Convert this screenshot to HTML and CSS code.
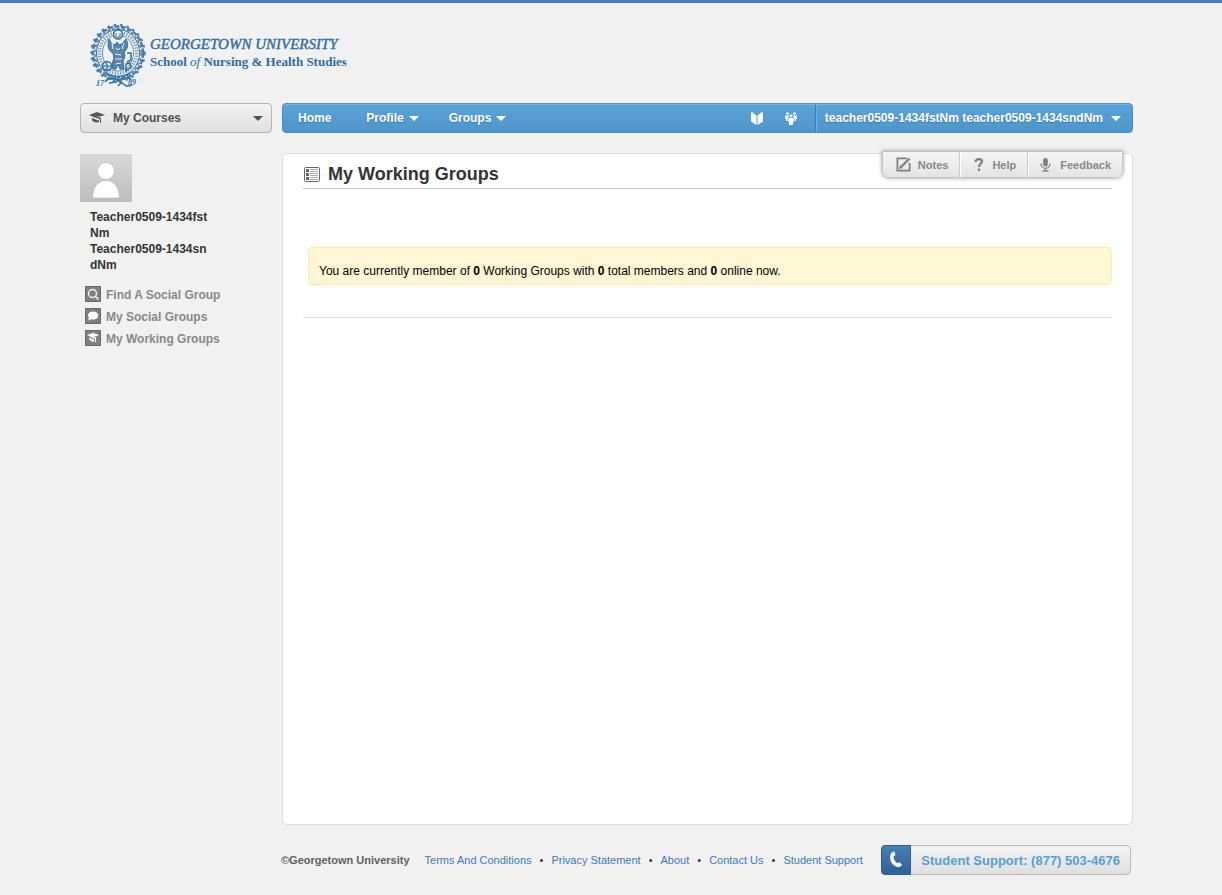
FILE: index.html
```html
<!DOCTYPE html>
<html lang="en">
<head>
<meta charset="utf-8">
<meta name="viewport" content="width=device-width, initial-scale=1">
<title>My Working Groups - Georgetown University</title>
<link rel="stylesheet" href="styles.css">
</head>
<body>
<div class="page">
  <header class="brand">
    <svg class="seal" viewBox="0 0 56 64" fill="none" stroke="#326c9f" aria-hidden="true">
      <ellipse cx="28" cy="29" rx="25" ry="26.500" stroke-width="2.500" stroke-dasharray="5 1.500" opacity=".85"/>
      <ellipse cx="28" cy="29" rx="26.500" ry="28" stroke-width="2.500" stroke-dasharray="2.500 4" opacity=".8"/>
      <ellipse cx="28" cy="29" rx="23" ry="24.500" stroke-width="1.500" stroke-dasharray="3 2" opacity=".8"/>
      <ellipse cx="28" cy="29" rx="21.500" ry="23.500" stroke-width="1"/>
      <ellipse cx="28" cy="29" rx="18.500" ry="20.500" stroke-width="3.500" stroke-dasharray="1.300 1.400" opacity=".6"/>
      <ellipse cx="28" cy="29" rx="15.500" ry="18" stroke-width="1" opacity=".7"/>
      <circle cx="28" cy="10.500" r="4.500" fill="#f1f1f1" stroke-width="1.500"/>
      <path d="M26 9v4h4V9" stroke-width="1"/>
      <path d="M19 15c-2 6-1 12 4 14l1 5-2 6 1 5h3l2-5 2 5h4l-1-8 2-5-1-4c5-4 4-9 2-13l-4 5-3 1-2-3-2 3-3-1z" fill="#326c9f" fill-opacity=".8" stroke-width="1"/>
      <path d="M22 19l1 6M34 19l-2 6M26 24l2 2 2-2M25 30l6 1M25 35h7M26 40l5-1" stroke="#f1f1f1" stroke-width="1"/>
      <circle cx="17" cy="42" r="4.500" stroke-width="1.500"/>
      <path d="M13 42h8M17 38v8" stroke-width="1"/>
      <path d="M37 29h4v7l-4 2M36 40l4-1 1 4-5 4z" stroke-width="1.500"/>
      <path d="M16 49c7 5 17 5 24 0" stroke-width="2" stroke-dasharray="3 1"/>
      <path d="M15 58c4-5 12-4 16 0s6 5 11 3M41 55c-5-2-11-1-15 3l-7 1M25 54l6 5-3 3" stroke-width="1.500"/>
      <g class="seal-year" fill="#326c9f" stroke="none"><text x="6" y="62">17</text><text x="38" y="61">89</text></g>
    </svg>
    <div class="brand-name">
      <span class="brand-university">GEORGETOWN UNIVERSITY</span>
      <span class="brand-school">School <i>of</i> Nursing &amp; Health Studies</span>
    </div>
  </header>

  <div class="bar">
    <button class="courses" type="button">
      <svg class="cap" viewBox="0 0 16 12" aria-hidden="true"><path fill="#555" d="M0 3l8-3 8 3-5 1.500C9.500 4 8 4 6 4.500c2 0 5 0 6 2V11h-1V7.500C10 6 8 6.300 6 5.500zM3 6l6 2.500 1-.5v2c-2 1-5 .5-7-1.500z"/></svg>
      <span>My Courses</span>
      <span class="caret caret-dark"></span>
    </button>
    <nav class="nav">
      <a class="nav-link" href="#">Home</a>
      <button class="nav-link" type="button">Profile<span class="caret"></span></button>
      <button class="nav-link" type="button">Groups<span class="caret"></span></button>
      <span class="nav-icons">
        <button class="icon-button" type="button" aria-label="Library"><svg class="icon-book" viewBox="0 0 12 13" aria-hidden="true"><path fill="#fff" d="M0 1l1-1 4.500 3.500V13L0 9.500zM12 1l-1-1-4.500 3.500V13L12 9.500z"/></svg></button>
        <button class="icon-button" type="button" aria-label="People"><svg class="icon-people" viewBox="0 0 12 13" fill="#fff" aria-hidden="true"><circle cx="2.500" cy="1.500" r="1.300"/><circle cx="9.500" cy="1.500" r="1.300"/><circle cx="6" cy="3.800" r="1.600"/><path d="M0 3.500h3.500v2L2.500 6.500V9H1V7H0zM12 3.500H8.500v2l1 1V9H11V7h1zM3.300 6h5.400v4H8v3H4v-3h-.7z"/></svg></button>
      </span>
      <button class="nav-user" type="button">teacher0509-1434fstNm teacher0509-1434sndNm<span class="caret"></span></button>
    </nav>
  </div>

  <div class="columns">
    <aside class="sidebar">
      <svg class="avatar" viewBox="0 0 52 48" role="img" aria-label="Profile picture">
        <defs><linearGradient id="avatar-bg" x2="0" y2="1"><stop stop-color="#d8d8d8"/><stop offset="1" stop-color="#bdbdbd"/></linearGradient></defs>
        <path fill="url(#avatar-bg)" d="M0 0h52v48H0z"/>
        <g fill="#fff" stroke="#aaa" stroke-opacity=".5"><circle cx="26" cy="17" r="8.500"/><path d="M12.500 44c0-10 5-17.500 13.500-17.500S39.500 34 39.500 44z"/></g>
      </svg>
      <p class="user-name">Teacher0509-1434fst<br>Nm<br>Teacher0509-1434sn<br>dNm</p>
      <ul class="side-links">
        <li><a href="#"><svg class="tile" viewBox="0 0 16 16" aria-hidden="true"><path fill="#808080" stroke="#666" d="M.5.500h15v15H.5z"/><g fill="none" stroke="#f4f4f4" stroke-width="1.400"><circle cx="7.500" cy="7.500" r="4"/><path d="M10.500 10.500l3 3"/></g></svg>Find A Social Group</a></li>
        <li><a href="#"><svg class="tile" viewBox="0 0 16 16" aria-hidden="true"><path fill="#808080" stroke="#666" d="M.5.500h15v15H.5z"/><path fill="#fff" d="M8 3.500c3 0 5.200 1.600 5.200 4s-2.200 4-5.200 4l-1.500-.2L3 12.500l1-2.500c-2.500-3 0-6.500 4-6.500z"/></svg>My Social Groups</a></li>
        <li><a href="#"><svg class="tile" viewBox="0 0 16 16" aria-hidden="true"><path fill="#808080" stroke="#666" d="M.5.500h15v15H.5z"/><path fill="#fff" d="M2 5l6-2 6 2-3 1.500H6c2 0 4 0 5 1.500v4h-1V9L8 8zM4 7.500L9 9.500V12C7 12 5 11 4.500 9.500z"/></svg>My Working Groups</a></li>
      </ul>
    </aside>

    <main class="panel">
      <div class="tools">
        <button class="tool tool-notes" type="button"><svg class="icon-notes" viewBox="0 0 15 15" fill="none" stroke="#808080" aria-hidden="true"><path stroke-width="1.800" d="M11 1.400H1.400v12.200h12.200V6"/><path stroke-width="2.400" d="M5.500 9.500l8-8"/><path fill="#808080" stroke="none" d="M3 12l1-4 3 3z"/></svg>Notes</button>
        <button class="tool tool-help" type="button"><svg class="icon-help" viewBox="0 0 10 13" fill="none" stroke="#808080" stroke-width="2.300" aria-hidden="true"><path d="M1.500 4C1.500 0 8 .5 8 3.500 8 6 5 5.500 5 9M5 10.500V13"/></svg>Help</button>
        <button class="tool tool-feedback" type="button"><svg class="icon-mic" viewBox="0 0 11 14" fill="none" stroke="#808080" aria-hidden="true"><rect x="3.200" y="0" width="4.600" height="8.500" rx="2.300" fill="#808080" stroke="none"/><path stroke-width="1.300" d="M1 5.500C1 12 10 12 10 5.500M5.500 10v3M2.500 13h6"/></svg>Feedback</button>
      </div>
      <h1 class="title"><svg class="icon-list" viewBox="0 0 16 16" aria-hidden="true"><rect x=".5" y="1.500" width="15" height="14" rx="1" fill="#fff" stroke="#666"/><path fill="#666" d="M2 3h3v3H2zM2 7h3v3H2zM2 11h3v3H2z"/><path stroke="#aaa" d="M6 3.500h8M6 5.500h8M6 7.500h8M6 9.500h8M6 11.500h8M6 13.500h8"/></svg>My Working Groups</h1>
      <p class="notice">You are currently member of <b>0</b> Working Groups with <b>0</b> total members and <b>0</b> online now.</p>
      <hr class="rule">
    </main>
  </div>

  <footer class="footer">
    <strong class="copyright">©Georgetown University</strong>
    <ul class="footer-links">
      <li><a href="#">Terms And Conditions</a></li>
      <li><a href="#">Privacy Statement</a></li>
      <li><a href="#">About</a></li>
      <li><a href="#">Contact Us</a></li>
      <li><a href="#">Student Support</a></li>
    </ul>
    <a class="support" href="tel:8775034676"><span class="phone"><svg class="icon-phone" viewBox="0 0 14 18" aria-hidden="true"><path fill="#fff" d="M2.500 1.500L5.500.5l1 3.500-2 1.200c0 3 1.500 5.500 4 7l2-1 2.500 2.500c-1.500 2.500-4 3-6.500 1.500C1 12.500 0 6 2.500 1.500z"/></svg></span><span class="support-text">Student Support: (877) 503-4676</span></a>
  </footer>
</div>
</body>
</html>
```
FILE: styles.css
```css
* { box-sizing: border-box; }
body {
  margin: 0;
  background: #f1f1f1;
  color: #333;
  font: 12px/16px "Liberation Sans", Arial, sans-serif;
}
button { margin: 0; padding: 0; border: 0; background: none; color: inherit; font: inherit; cursor: pointer; }
a { color: inherit; text-decoration: none; }
ul, p, h1 { margin: 0; padding: 0; }
ul { list-style: none; }
svg { display: block; flex: none; }

.page {
  display: flex;
  flex-direction: column;
  min-height: 100vh;
  padding: 0 89px 20px 80px;
  border-top: 3px solid #4b7cb9;
}

.brand { display: flex; height: 100px; padding: 21px 0 0 10px; gap: 4px; color: #326c9f; }
.seal { width: 56px; height: 64px; }
.seal-year { font: italic bold 8px "Liberation Serif", serif; }
.brand-name {
  display: flex;
  flex-direction: column;
  padding-top: 11px;
  font-family: "Liberation Serif", "Times New Roman", serif;
  line-height: 18px;
  white-space: nowrap;
}
.brand-university { font-size: 15px; font-style: italic; -webkit-text-stroke: 0.4px #326c9f; }
.brand-school { font-size: 13px; font-weight: bold; }
.brand-school i { font-weight: normal; }

.bar { display: flex; gap: 10px; height: 30px; }
.courses {
  display: flex;
  align-items: center;
  gap: 8px;
  width: 192px;
  padding: 0 8px;
  border: 1px solid #b5b5b5;
  border-radius: 4px;
  background: linear-gradient(#f2f2f2, #e0e0e0);
  color: #505050;
  font-weight: bold;
}
.cap { width: 16px; height: 12px; }
.caret {
  display: inline-block;
  border: 5px solid transparent;
  border-top-color: #fff;
  border-bottom: 0;
}
.caret-dark { margin-left: auto; border-top-color: #505050; }

.nav {
  display: flex;
  flex: 1;
  align-items: stretch;
  padding-left: 15px;
  border: 1px solid #458fc6;
  border-radius: 4px;
  background: linear-gradient(#5aa2d8, #4e95ca);
  box-shadow: inset 0 1px #70b5e8;
  color: #fff;
  font-weight: bold;
  text-shadow: 0 1px 1px #3a78a8;
}
.nav-link { display: flex; align-items: center; gap: 5px; margin-right: 30px; text-shadow: inherit; }
.nav-link:first-child { margin-right: 35px; }
.nav-icons { display: flex; gap: 22px; margin-left: auto; padding-right: 18px; }
.icon-button { display: flex; align-items: center; }
.icon-book { width: 12px; height: 13px; }
.icon-people { width: 12px; height: 13px; }
.nav-user {
  display: flex;
  align-items: center;
  gap: 8px;
  padding: 0 11px 0 9px;
  border-left: 1px solid #3c80b4;
  box-shadow: inset 1px 0 #70b0df;
  text-shadow: inherit;
}

.columns { display: flex; flex: 1; gap: 10px; padding-top: 20px; }
.sidebar { width: 192px; padding-top: 1px; }
.avatar { width: 52px; height: 48px; }
.user-name { padding: 7px 10px 0; font-weight: bold; }
.side-links { padding: 11px 0 0 5px; color: #888; font-weight: bold; }
.side-links a { display: flex; align-items: flex-start; gap: 5px; height: 22px; padding-top: 2px; line-height: 18px; }
.tile { width: 16px; height: 16px; }

.panel {
  position: relative;
  flex: 1;
  padding: 8px 20px 0;
  border: 1px solid #dcdcdc;
  border-radius: 5px;
  background: #fff;
}
.title {
  display: flex;
  align-items: center;
  gap: 8px;
  padding: 0 0 2px 1px;
  border-bottom: 1px solid #c8c8c8;
  font-size: 18px;
  line-height: 24px;
}
.icon-list { width: 16px; height: 16px; }
.notice {
  margin: 58px 0 0 5px;
  padding: 15px 10px 5px;
  border: 1px solid #ffeba2;
  border-radius: 4px;
  background: #fff6d6;
  color: #000;
}
.rule { margin: 32px 0 0; border: 0; border-top: 1px solid #dcdcdc; }

.tools {
  position: absolute;
  top: -2px;
  right: 10px;
  display: flex;
  height: 25px;
  border-radius: 0 0 6px 6px;
  background: linear-gradient(#f4f4f4, #e4e4e4);
  box-shadow: 0 0 4px 1px #999;
  color: #888;
  font-size: 11px;
  font-weight: bold;
}
.tool { display: flex; align-items: center; }
.tool + .tool { border-left: 1px solid #ccc; box-shadow: inset 1px 0 #fff; }
.tool-notes { gap: 7px; padding: 0 11px 0 13px; }
.tool-help { gap: 8px; padding: 0 11px 0 14px; }
.tool-feedback { gap: 9px; padding: 0 11px 0 12px; }
.icon-notes { width: 15px; height: 15px; }
.icon-help { width: 10px; height: 13px; }
.icon-mic { width: 11px; height: 14px; }

.footer { display: flex; align-items: center; padding: 20px 2px 0 201px; font-size: 11px; white-space: nowrap; }
.copyright { color: #606060; }
.footer-links { display: flex; padding-left: 15px; color: #3f79bd; }
.footer-links li + li::before { content: "•"; padding: 0 8px; color: #333; }
.support {
  display: flex;
  height: 30px;
  margin-left: auto;
  border: 1px solid #bbb;
  border-radius: 4px;
  background: linear-gradient(#f3f3f3, #dfdfdf);
  color: #569fd6;
  font-size: 13px;
  font-weight: bold;
}
.phone {
  display: flex;
  align-items: center;
  justify-content: center;
  width: 30px;
  margin: -1px 0 -1px -1px;
  border: 1px solid #315f8f;
  border-radius: 4px 0 0 4px;
  background: linear-gradient(#4880b3, #315f98);
}
.icon-phone { width: 14px; height: 18px; }
.support-text { padding: 0 10px; line-height: 29px; }
```
